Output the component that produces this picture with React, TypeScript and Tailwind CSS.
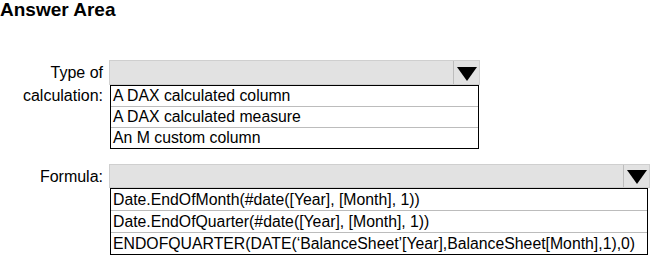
import React from "react";

const Arrow = () => (
  <svg width="20" height="14" viewBox="0 0 20 14">
    <polygon points="0,0 20,0 10,14" fill="#000" />
  </svg>
);

type DropProps = {
  width: string;
  listWidth: string;
  headH: string;
  rowH: string;
  options: string[];
};

const Dropdown: React.FC<DropProps> = ({ width, listWidth, headH, rowH, options }) => {
  return (
    <div className={width}>
      <div className={`flex border border-[#cfcfcf] bg-[#e2e2e2] ${headH}`}>
        <div className="flex-1" />
        <div className="flex w-[26px] items-center justify-center border-l border-[#bdbdbd] pt-[2px]">
          <Arrow />
        </div>
      </div>
      <div className={`ml-[1px] border border-black bg-white ${listWidth}`}>
        {options.map((o, i) => (
          <div
            key={o}
            className={`px-[2px] text-[15.8px] whitespace-nowrap ${rowH} ${
              i < options.length - 1 ? "border-b border-[#bcbcbc]" : ""
            }`}
          >
            {o}
          </div>
        ))}
      </div>
    </div>
  );
};

export default function App() {
  return (
    <div className="h-[256px] w-[650px] overflow-hidden bg-white font-['Liberation_Sans',Arial,sans-serif] text-black">
      <h1 className="text-[19px] leading-[20px] font-bold">Answer Area</h1>
      <div className="mt-[40px] flex">
        <div className="w-[103px] pt-[1px] text-right text-[16px] leading-[23px]">
          Type of
          <br />
          calculation:
        </div>
        <Dropdown
          width="ml-[6px] w-[371px]"
          listWidth="w-[369px]"
          headH="h-[25px]"
          rowH="leading-[20px]"
          options={[
            "A DAX calculated column",
            "A DAX calculated measure",
            "An M custom column",
          ]}
        />
      </div>
      <div className="mt-[15px] flex">
        <div className="w-[103px] pt-[1px] text-right text-[16px] leading-[23px]">
          Formula:
        </div>
        <Dropdown
          width="ml-[6px] w-[541px]"
          listWidth="w-[538px]"
          headH="h-[24px]"
          rowH="leading-[21px]"
          options={[
            "Date.EndOfMonth(#date([Year], [Month], 1))",
            "Date.EndOfQuarter(#date([Year], [Month], 1))",
            "ENDOFQUARTER(DATE(‘BalanceSheet’[Year],BalanceSheet[Month],1),0)",
          ]}
        />
      </div>
    </div>
  );
}
